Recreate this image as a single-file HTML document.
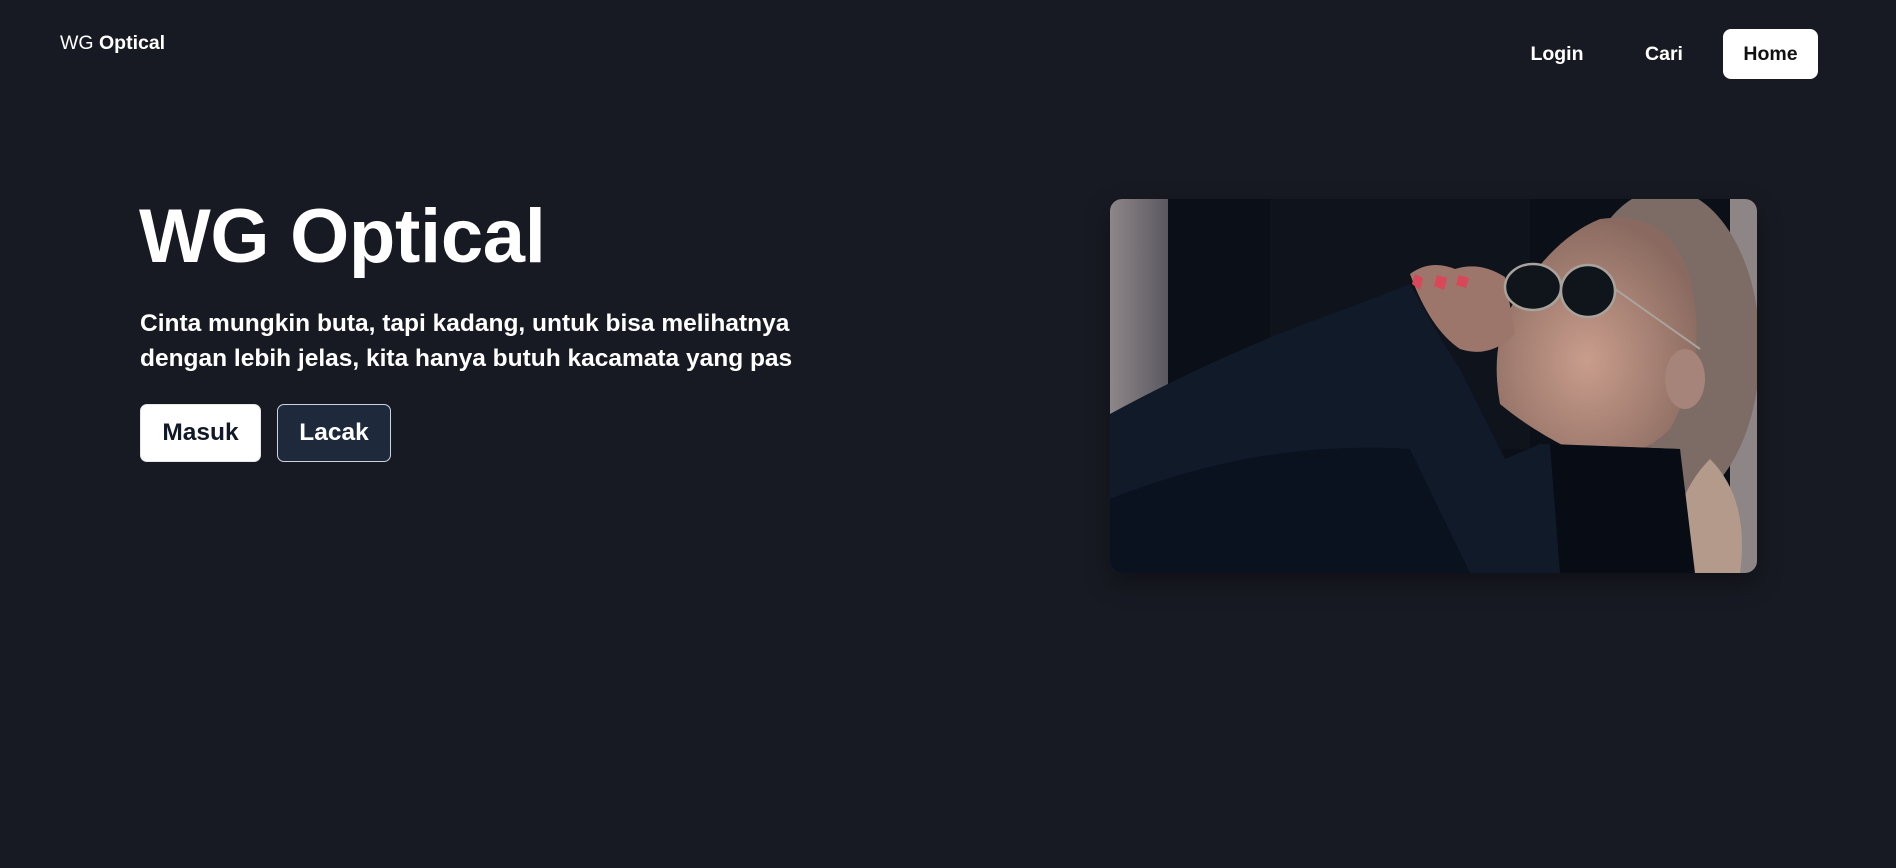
<!DOCTYPE html>
<html><head><meta charset="utf-8"><style>
*{margin:0;padding:0;box-sizing:border-box}
html,body{width:1896px;height:868px;background:#181a23;overflow:hidden;font-family:"Liberation Sans",Arial,sans-serif;color:#fff}
.logo{position:absolute;left:60px;top:32px;font-size:19.5px}
.logo b{font-weight:700}
.nav{position:absolute;top:29px;height:50px;font-size:19.5px;font-weight:700;line-height:50px;text-align:center}
.home{background:#fff;color:#111;border-radius:8px;left:1723px;width:95px}
h1{position:absolute;left:139px;top:190px;font-size:76px;font-weight:700;line-height:94px;letter-spacing:-0.3px}
.sub{position:absolute;left:140px;top:306px;font-size:24.5px;font-weight:700;line-height:35px;width:705px}
.btn{position:absolute;top:404px;height:58px;line-height:56px;font-size:24.5px;font-weight:700;text-align:center;border-radius:7px}
.m{left:140px;width:121px;background:#fff;color:#111827;border:1px solid #e5e7eb}
.l{left:277px;width:114px;background:#1e293b;color:#fff;border:1.5px solid #cbd5e1}
.img{position:absolute;left:1110px;top:199px;width:647px;height:374px;border-radius:12px;overflow:hidden;box-shadow:0 10px 25px rgba(0,0,0,.35)}
</style></head><body>
<div class="logo">WG <b>Optical</b></div>
<div class="nav" style="left:1520px;width:74px">Login</div>
<div class="nav" style="left:1637px;width:54px">Cari</div>
<div class="nav home">Home</div>
<h1>WG Optical</h1>
<div class="sub">Cinta mungkin buta, tapi kadang, untuk bisa melihatnya dengan lebih jelas, kita hanya butuh kacamata yang pas</div>
<div class="btn m">Masuk</div>
<div class="btn l">Lacak</div>
<div class="img"><svg width="647" height="374" viewBox="0 0 647 374">
<defs>
<linearGradient id="g" x1="0" x2="1"><stop offset="0" stop-color="#8d8789"/><stop offset="1" stop-color="#5b5860"/></linearGradient>
<radialGradient id="sk" cx=".45" cy=".6" r=".6"><stop offset="0" stop-color="#c99d8c"/><stop offset="1" stop-color="#8a6a60"/></radialGradient>
</defs>
<rect width="647" height="374" fill="#0b0f17"/>
<rect x="0" y="0" width="58" height="374" fill="url(#g)"/>
<rect x="620" y="0" width="27" height="374" fill="#8e8586"/>
<rect x="160" y="0" width="260" height="250" fill="#0e131c"/>
<ellipse cx="555" cy="150" rx="95" ry="160" fill="#7d6c66"/>
<path d="M600 260 Q640 300 630 374 L560 374 Q560 300 600 260Z" fill="#b39a8a"/>
<path d="M490 20 Q560 10 580 80 Q600 160 560 230 Q520 270 460 250 Q420 230 390 205 Q380 150 400 110 Q440 40 490 20Z" fill="url(#sk)"/>
<ellipse cx="575" cy="180" rx="20" ry="30" fill="#a6847a"/>
<path d="M300 75 Q320 60 345 70 Q370 62 395 78 L405 135 Q380 160 350 150 Q320 130 300 75Z" fill="#9c766a"/>
<path d="M305 75 l8 4 l-3 12 l-8 -6Z M327 76 l10 3 l-3 12 l-10 -4Z M349 76 l10 3 l-3 10 l-10 -3Z" fill="#d8485a"/>
<ellipse cx="423" cy="88" rx="28" ry="23" fill="#10141b" stroke="#a9a39d" stroke-width="2.5"/>
<ellipse cx="478" cy="92" rx="27" ry="26" fill="#10141b" stroke="#a9a39d" stroke-width="2.5"/>
<line x1="505" y1="90" x2="590" y2="150" stroke="#a9a39d" stroke-width="2"/>
<path d="M0 215 Q120 150 235 110 L300 85 Q330 140 350 170 Q380 230 395 260 L430 245 L570 250 L580 374 L0 374Z" fill="#111a29"/>
<path d="M0 300 Q150 240 300 250 L360 374 L0 374Z" fill="#0a1220"/>
<path d="M440 245 L570 250 L585 374 L450 374Z" fill="#070c15"/>
</svg></div>
</body></html>
